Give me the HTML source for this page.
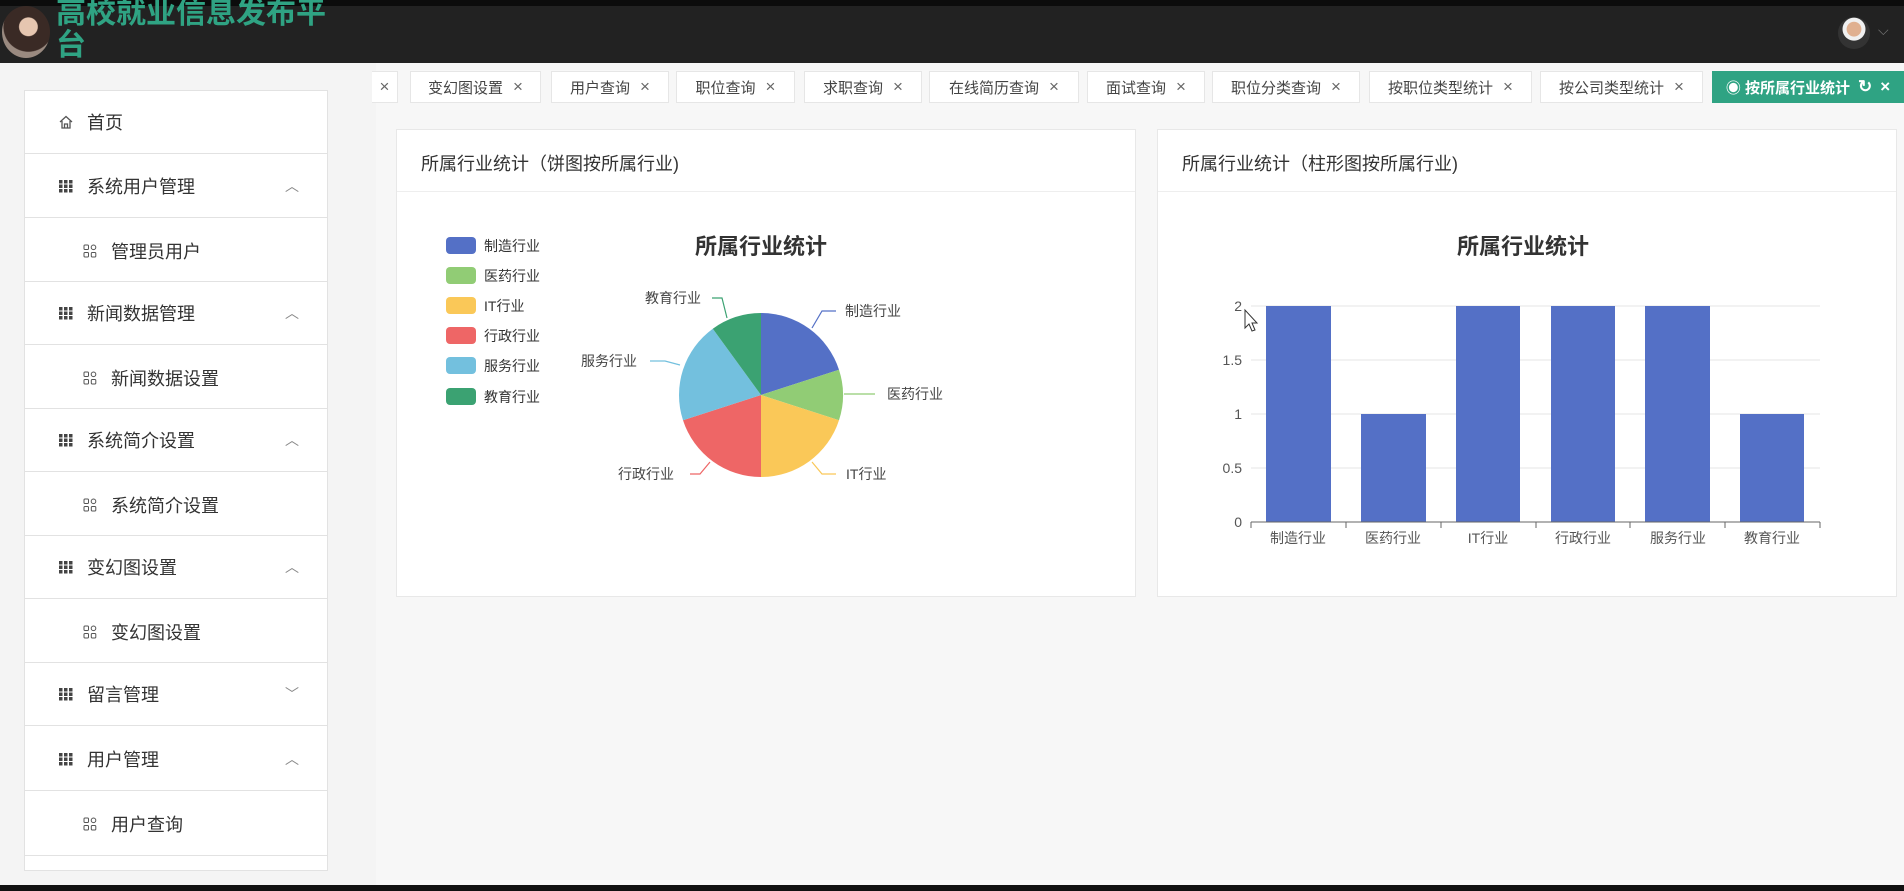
<!DOCTYPE html>
<html><head><meta charset="utf-8"><style>
*{margin:0;padding:0;box-sizing:border-box}
body{width:1904px;height:891px;overflow:hidden;background:#f7f7f7;font-family:"Liberation Sans","Noto Sans CJK SC",sans-serif;position:relative;color:#333}
.abs{position:absolute}
#hdr{left:0;top:0;width:1904px;height:63px;background:#222;border-top:6px solid #0c0c0c}
.title{left:56px;top:-2px;width:280px;font-size:30px;line-height:32px;font-weight:bold;color:#2fa383;letter-spacing:0}
.side{left:24px;top:90px;width:304px;height:781px;background:#fff;border:1px solid #e2e2e2}
.item{position:absolute;left:0;width:302px;height:63px;border-bottom:1px solid #e2e2e2;font-size:18px;color:#333;display:flex;align-items:center}
.item.g{padding-left:34px}
.item.s{padding-left:58px;border-bottom:none}
.ic{width:14px;height:14px;margin-right:14px;display:inline-block}
.arr{position:absolute;right:28px;font-size:14px;color:#888}
.tab{position:absolute;top:71px;height:32px;background:#fff;border:1px solid #e6e6e6;font-size:15px;color:#444;display:flex;align-items:center;justify-content:center;gap:10px}
.tab span{color:#666;font-size:17px}
.card{background:#fff;border:1px solid #e8e8e8}
.ch{height:62px;border-bottom:1px solid #eee;font-size:18px;padding:20px 24px;color:#333}
</style></head><body>
<div id="hdr" class="abs"></div>
<div class="abs" style="left:2px;top:6px;width:48px;height:52px;border-radius:50%;background:radial-gradient(circle at 55% 40%,#e6c6b0 0 22%,#3a2a25 24% 60%,#9a8a80 62%)"></div>
<div class="abs title">高校就业信息发布平台</div>
<div class="abs" style="left:1838px;top:17px;width:32px;height:32px;border-radius:50%;background:radial-gradient(circle at 50% 38%,#e0b090 0 28%,#f0f0f0 30% 44%,#333 46%)"></div>
<div class="abs" style="left:1878px;top:22px;color:#777;font-size:14px">⌵</div>
<div class="abs" style="left:0;top:63px;width:376px;height:828px;background:#f4f4f4"></div>
<div class="abs side">
 <div class="item g" style="top:0">
  <svg class="ic" viewBox="0 0 14 14"><path d="M1 7L7 1.5 13 7M3 6v7h8V6M5.5 13V9h3v4" fill="none" stroke="#555" stroke-width="1.3"/></svg>首页</div>
 <div class="item g" style="top:64px"><svg class="ic" viewBox="0 0 14 14" fill="#444"><rect x="0" y="1" width="3.5" height="3.5"/><rect x="5" y="1" width="3.5" height="3.5"/><rect x="10" y="1" width="3.5" height="3.5"/><rect x="0" y="5.5" width="3.5" height="3.5"/><rect x="5" y="5.5" width="3.5" height="3.5"/><rect x="10" y="5.5" width="3.5" height="3.5"/><rect x="0" y="10" width="3.5" height="3.5"/><rect x="5" y="10" width="3.5" height="3.5"/><rect x="10" y="10" width="3.5" height="3.5"/></svg>系统用户管理<span class="arr">︿</span></div>
 <div class="item s" style="top:128px"><svg class="ic" viewBox="0 0 14 14" fill="none" stroke="#555"><rect x="1" y="1" width="4.5" height="4.5" rx="1"/><circle cx="10.5" cy="3.3" r="2.3"/><rect x="1" y="8.5" width="4.5" height="4.5" rx="1"/><rect x="8.3" y="8.5" width="4.5" height="4.5" rx="1"/></svg>管理员用户</div>
 <div class="abs" style="left:0;top:190px;width:302px;border-top:1px solid #e2e2e2"></div>
 <div class="item g" style="top:191px"><svg class="ic" viewBox="0 0 14 14" fill="#444"><rect x="0" y="1" width="3.5" height="3.5"/><rect x="5" y="1" width="3.5" height="3.5"/><rect x="10" y="1" width="3.5" height="3.5"/><rect x="0" y="5.5" width="3.5" height="3.5"/><rect x="5" y="5.5" width="3.5" height="3.5"/><rect x="10" y="5.5" width="3.5" height="3.5"/><rect x="0" y="10" width="3.5" height="3.5"/><rect x="5" y="10" width="3.5" height="3.5"/><rect x="10" y="10" width="3.5" height="3.5"/></svg>新闻数据管理<span class="arr">︿</span></div>
 <div class="item s" style="top:255px"><svg class="ic" viewBox="0 0 14 14" fill="none" stroke="#555"><rect x="1" y="1" width="4.5" height="4.5" rx="1"/><circle cx="10.5" cy="3.3" r="2.3"/><rect x="1" y="8.5" width="4.5" height="4.5" rx="1"/><rect x="8.3" y="8.5" width="4.5" height="4.5" rx="1"/></svg>新闻数据设置</div>
 <div class="abs" style="left:0;top:317px;width:302px;border-top:1px solid #e2e2e2"></div>
 <div class="item g" style="top:318px"><svg class="ic" viewBox="0 0 14 14" fill="#444"><rect x="0" y="1" width="3.5" height="3.5"/><rect x="5" y="1" width="3.5" height="3.5"/><rect x="10" y="1" width="3.5" height="3.5"/><rect x="0" y="5.5" width="3.5" height="3.5"/><rect x="5" y="5.5" width="3.5" height="3.5"/><rect x="10" y="5.5" width="3.5" height="3.5"/><rect x="0" y="10" width="3.5" height="3.5"/><rect x="5" y="10" width="3.5" height="3.5"/><rect x="10" y="10" width="3.5" height="3.5"/></svg>系统简介设置<span class="arr">︿</span></div>
 <div class="item s" style="top:382px"><svg class="ic" viewBox="0 0 14 14" fill="none" stroke="#555"><rect x="1" y="1" width="4.5" height="4.5" rx="1"/><circle cx="10.5" cy="3.3" r="2.3"/><rect x="1" y="8.5" width="4.5" height="4.5" rx="1"/><rect x="8.3" y="8.5" width="4.5" height="4.5" rx="1"/></svg>系统简介设置</div>
 <div class="abs" style="left:0;top:444px;width:302px;border-top:1px solid #e2e2e2"></div>
 <div class="item g" style="top:445px"><svg class="ic" viewBox="0 0 14 14" fill="#444"><rect x="0" y="1" width="3.5" height="3.5"/><rect x="5" y="1" width="3.5" height="3.5"/><rect x="10" y="1" width="3.5" height="3.5"/><rect x="0" y="5.5" width="3.5" height="3.5"/><rect x="5" y="5.5" width="3.5" height="3.5"/><rect x="10" y="5.5" width="3.5" height="3.5"/><rect x="0" y="10" width="3.5" height="3.5"/><rect x="5" y="10" width="3.5" height="3.5"/><rect x="10" y="10" width="3.5" height="3.5"/></svg>变幻图设置<span class="arr">︿</span></div>
 <div class="item s" style="top:509px"><svg class="ic" viewBox="0 0 14 14" fill="none" stroke="#555"><rect x="1" y="1" width="4.5" height="4.5" rx="1"/><circle cx="10.5" cy="3.3" r="2.3"/><rect x="1" y="8.5" width="4.5" height="4.5" rx="1"/><rect x="8.3" y="8.5" width="4.5" height="4.5" rx="1"/></svg>变幻图设置</div>
 <div class="abs" style="left:0;top:571px;width:302px;border-top:1px solid #e2e2e2"></div>
 <div class="item g" style="top:572px"><svg class="ic" viewBox="0 0 14 14" fill="#444"><rect x="0" y="1" width="3.5" height="3.5"/><rect x="5" y="1" width="3.5" height="3.5"/><rect x="10" y="1" width="3.5" height="3.5"/><rect x="0" y="5.5" width="3.5" height="3.5"/><rect x="5" y="5.5" width="3.5" height="3.5"/><rect x="10" y="5.5" width="3.5" height="3.5"/><rect x="0" y="10" width="3.5" height="3.5"/><rect x="5" y="10" width="3.5" height="3.5"/><rect x="10" y="10" width="3.5" height="3.5"/></svg>留言管理<span class="arr">﹀</span></div>
 <div class="item g" style="top:637px"><svg class="ic" viewBox="0 0 14 14" fill="#444"><rect x="0" y="1" width="3.5" height="3.5"/><rect x="5" y="1" width="3.5" height="3.5"/><rect x="10" y="1" width="3.5" height="3.5"/><rect x="0" y="5.5" width="3.5" height="3.5"/><rect x="5" y="5.5" width="3.5" height="3.5"/><rect x="10" y="5.5" width="3.5" height="3.5"/><rect x="0" y="10" width="3.5" height="3.5"/><rect x="5" y="10" width="3.5" height="3.5"/><rect x="10" y="10" width="3.5" height="3.5"/></svg>用户管理<span class="arr">︿</span></div>
 <div class="item s" style="top:701px"><svg class="ic" viewBox="0 0 14 14" fill="none" stroke="#555"><rect x="1" y="1" width="4.5" height="4.5" rx="1"/><circle cx="10.5" cy="3.3" r="2.3"/><rect x="1" y="8.5" width="4.5" height="4.5" rx="1"/><rect x="8.3" y="8.5" width="4.5" height="4.5" rx="1"/></svg>用户查询</div>
 <div class="abs" style="left:0;top:764px;width:302px;border-top:1px solid #e2e2e2"></div>
</div>
<div class="abs" style="left:0;top:885px;width:1904px;height:6px;background:#111"></div>

<div class="tab" style="left:372px;width:26px;border-left:none"><span>×</span></div>
<div class="tab" style="left:410px;width:131px">变幻图设置 <span>×</span></div>
<div class="tab" style="left:551px;width:118px">用户查询 <span>×</span></div>
<div class="tab" style="left:676px;width:119px">职位查询 <span>×</span></div>
<div class="tab" style="left:804px;width:118px">求职查询 <span>×</span></div>
<div class="tab" style="left:929px;width:150px">在线简历查询 <span>×</span></div>
<div class="tab" style="left:1087px;width:118px">面试查询 <span>×</span></div>
<div class="tab" style="left:1212px;width:148px">职位分类查询 <span>×</span></div>
<div class="tab" style="left:1369px;width:163px">按职位类型统计 <span>×</span></div>
<div class="tab" style="left:1540px;width:163px">按公司类型统计 <span>×</span></div>
<div class="tab" style="left:1712px;width:192px;background:#2fa383;border-color:#2fa383;color:#fff;font-weight:bold;gap:8px">◉ 按所属行业统计 <span style="color:#fff">↻</span><span style="color:#fff">×</span></div>

<div class="abs card" style="left:396px;top:129px;width:740px;height:468px"><div class="ch">所属行业统计（饼图按所属行业)</div></div>
<div class="abs card" style="left:1157px;top:129px;width:740px;height:468px"><div class="ch">所属行业统计（柱形图按所属行业)</div></div>

<svg class="abs" style="left:0;top:0" width="1904" height="891" font-family="Liberation Sans,Noto Sans CJK SC,sans-serif">
 <text x="761" y="254" font-size="22" font-weight="bold" text-anchor="middle" fill="#333">所属行业统计</text>
 <g font-size="14" fill="#333">
  <rect x="446" y="237" width="30" height="17" rx="4" fill="#5470c6"/><text x="484" y="251">制造行业</text>
  <rect x="446" y="267" width="30" height="17" rx="4" fill="#91cc75"/><text x="484" y="281">医药行业</text>
  <rect x="446" y="297" width="30" height="17" rx="4" fill="#fac858"/><text x="484" y="311">IT行业</text>
  <rect x="446" y="327" width="30" height="17" rx="4" fill="#ee6666"/><text x="484" y="341">行政行业</text>
  <rect x="446" y="357" width="30" height="17" rx="4" fill="#73c0de"/><text x="484" y="371">服务行业</text>
  <rect x="446" y="388" width="30" height="17" rx="4" fill="#3ba272"/><text x="484" y="402">教育行业</text>
 </g>
 <g transform="translate(761,395)">
  <path d="M0 0V-82A82 82 0 0 1 78 -25.3Z" fill="#5470c6"/>
  <path d="M0 0L78 -25.3A82 82 0 0 1 78 25.3Z" fill="#91cc75"/>
  <path d="M0 0L78 25.3A82 82 0 0 1 0 82Z" fill="#fac858"/>
  <path d="M0 0V82A82 82 0 0 1 -78 25.3Z" fill="#ee6666"/>
  <path d="M0 0L-78 25.3A82 82 0 0 1 -48.2 -66.3Z" fill="#73c0de"/>
  <path d="M0 0L-48.2 -66.3A82 82 0 0 1 0 -82Z" fill="#3ba272"/>
 </g>
 <g fill="none" stroke-width="1.2">
  <polyline points="812,328 822,311 836,311" stroke="#5470c6"/>
  <polyline points="844,394 875,394" stroke="#91cc75"/>
  <polyline points="812,462 822,474 836,474" stroke="#fac858"/>
  <polyline points="710,462 700,474 690,474" stroke="#ee6666"/>
  <polyline points="680,365 665,361 650,361" stroke="#73c0de"/>
  <polyline points="727,318 722,298 712,298" stroke="#3ba272"/>
 </g>
 <g font-size="14" fill="#444">
  <text x="845" y="316">制造行业</text><text x="887" y="399">医药行业</text><text x="846" y="479">IT行业</text>
  <text x="618" y="479">行政行业</text><text x="581" y="366">服务行业</text><text x="645" y="303">教育行业</text>
 </g>
 <text x="1523" y="254" font-size="22" font-weight="bold" text-anchor="middle" fill="#333">所属行业统计</text>
 <g stroke="#e6e6e6"><line x1="1251" y1="306" x2="1820" y2="306"/><line x1="1251" y1="360" x2="1820" y2="360"/><line x1="1251" y1="414" x2="1820" y2="414"/><line x1="1251" y1="468" x2="1820" y2="468"/></g>
 <g fill="#5470c6">
  <rect x="1266" y="306" width="65" height="216"/><rect x="1361" y="414" width="65" height="108"/><rect x="1456" y="306" width="64" height="216"/>
  <rect x="1551" y="306" width="64" height="216"/><rect x="1645" y="306" width="65" height="216"/><rect x="1740" y="414" width="64" height="108"/>
 </g>
 <g stroke="#666"><line x1="1251" y1="522" x2="1820" y2="522"/>
  <line x1="1251" y1="522" x2="1251" y2="528"/><line x1="1346" y1="522" x2="1346" y2="528"/><line x1="1441" y1="522" x2="1441" y2="528"/><line x1="1536" y1="522" x2="1536" y2="528"/><line x1="1630" y1="522" x2="1630" y2="528"/><line x1="1725" y1="522" x2="1725" y2="528"/><line x1="1820" y1="522" x2="1820" y2="528"/></g>
 <g font-size="14" fill="#555" text-anchor="end"><text x="1242" y="311">2</text><text x="1242" y="365">1.5</text><text x="1242" y="419">1</text><text x="1242" y="473">0.5</text><text x="1242" y="527">0</text></g>
 <g font-size="14" fill="#555" text-anchor="middle"><text x="1298" y="543">制造行业</text><text x="1393" y="543">医药行业</text><text x="1488" y="543">IT行业</text><text x="1583" y="543">行政行业</text><text x="1678" y="543">服务行业</text><text x="1772" y="543">教育行业</text></g>
 <path d="M1245 310v18l4-4 3 7 3-1-3-7h5z" fill="#fff" stroke="#333"/>
</svg>
</body></html>
